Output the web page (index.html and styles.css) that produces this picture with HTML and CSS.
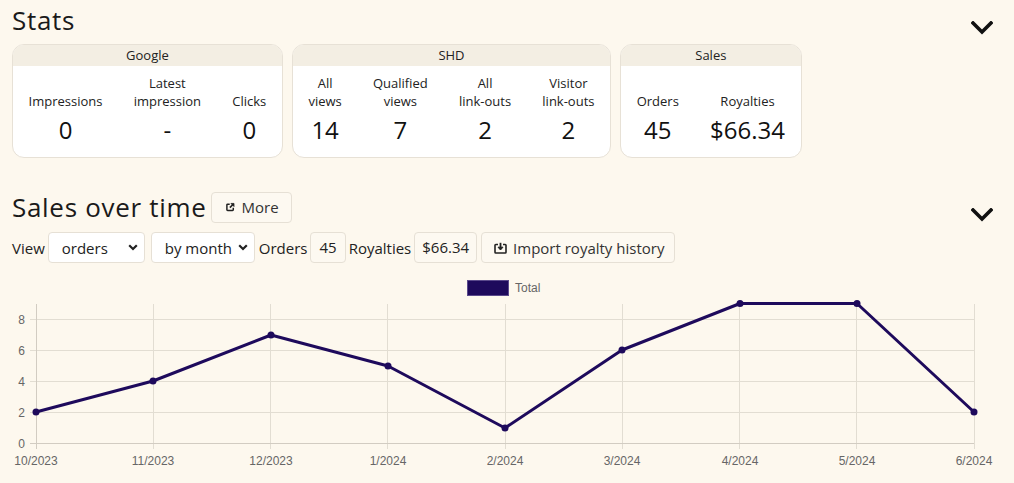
FILE: index.html
```html
<!DOCTYPE html>
<html lang="en">
<head>
<meta charset="utf-8">
<title>Stats</title>
<link rel="stylesheet" href="styles.css">
</head>
<body>
<main class="page">
  <section class="section">
    <div class="section-head">
      <h2 class="title">Stats</h2>
      <svg class="chev" width="22" height="14" viewBox="0 0 22 14"><polyline points="2,2 11,11 20,2" fill="none" stroke="#111" stroke-width="3.6" stroke-linecap="square"/></svg>
    </div>
    <div class="cards">
      <div class="card">
        <div class="card-head">Google</div>
        <div class="card-body">
          <div class="stat"><div class="label">Impressions</div><div class="value">0</div></div>
          <div class="stat"><div class="label">Latest<br>impression</div><div class="value">-</div></div>
          <div class="stat"><div class="label">Clicks</div><div class="value">0</div></div>
        </div>
      </div>
      <div class="card">
        <div class="card-head">SHD</div>
        <div class="card-body">
          <div class="stat"><div class="label">All<br>views</div><div class="value">14</div></div>
          <div class="stat"><div class="label">Qualified<br>views</div><div class="value">7</div></div>
          <div class="stat"><div class="label">All<br>link-outs</div><div class="value">2</div></div>
          <div class="stat"><div class="label">Visitor<br>link-outs</div><div class="value">2</div></div>
        </div>
      </div>
      <div class="card">
        <div class="card-head">Sales</div>
        <div class="card-body">
          <div class="stat"><div class="label">Orders</div><div class="value">45</div></div>
          <div class="stat"><div class="label">Royalties</div><div class="value">$66.34</div></div>
        </div>
      </div>
    </div>
  </section>

  <section class="section sales">
    <div class="section-head">
      <div class="title-row">
        <h2 class="title">Sales over time</h2>
        <button class="btn more">
          <svg width="12" height="12" viewBox="0 0 12 12"><path d="M5 2.2H2.2c-.6 0-1 .4-1 1v6.6c0 .6.4 1 1 1h6.6c.6 0 1-.4 1-1V7" fill="none" stroke="#222" stroke-width="2"/><path d="M6.6 1.2h4.2v4.2z" fill="#222" stroke="#222" stroke-width="1" stroke-linejoin="round"/><path d="M10 2L5.2 6.8" fill="none" stroke="#222" stroke-width="2.2"/></svg>
          More
        </button>
      </div>
      <svg class="chev" width="22" height="14" viewBox="0 0 22 14"><polyline points="2,2 11,11 20,2" fill="none" stroke="#111" stroke-width="3.6" stroke-linecap="square"/></svg>
    </div>
    <div class="controls">
      <span class="ctl-label">View</span>
      <div class="select w-orders"><span>orders</span><svg width="10" height="7" viewBox="0 0 10 7"><polyline points="1.2,1.2 5,5 8.8,1.2" fill="none" stroke="#222" stroke-width="2.2"/></svg></div>
      <div class="select w-month"><span>by month</span><svg width="10" height="7" viewBox="0 0 10 7"><polyline points="1.2,1.2 5,5 8.8,1.2" fill="none" stroke="#222" stroke-width="2.2"/></svg></div>
      <span class="ctl-label orders-label">Orders</span>
      <span class="box box-orders">45</span>
      <span class="ctl-label">Royalties</span>
      <span class="box">$66.34</span>
      <button class="btn import">
        <svg width="13" height="12" viewBox="0 0 13 12"><path d="M4 2.5H1.8c-.5 0-.8.3-.8.8v6.9c0 .5.3.8.8.8h9.4c.5 0 .8-.3.8-.8V3.3c0-.5-.3-.8-.8-.8H9" fill="none" stroke="#222" stroke-width="1.6"/><path d="M6.5 .8v6" fill="none" stroke="#222" stroke-width="1.8"/><path d="M4 5.2L6.5 8 9 5.2z" fill="#222" stroke="#222" stroke-width="1" stroke-linejoin="round"/></svg>
        Import royalty history
      </button>
    </div>
    <div class="chart">
      <svg width="990" height="213" viewBox="0 0 990 213" class="chart-svg">
        <g font-family="Liberation Sans, Arial, sans-serif" font-size="12" fill="#666">
          <rect x="455.5" y="10.5" width="41" height="15" fill="#1e0a5c" stroke="#5b4a8c" stroke-width="1"/>
          <text x="503" y="21.5">Total</text>
        </g>
        <g stroke="#e2ddd2" stroke-width="1">
          <line x1="18" y1="49.5" x2="962" y2="49.5"/>
          <line x1="18" y1="80.5" x2="962" y2="80.5"/>
          <line x1="18" y1="111.5" x2="962" y2="111.5"/>
          <line x1="18" y1="142.5" x2="962" y2="142.5"/>
          <line x1="141.5" y1="34" x2="141.5" y2="179"/>
          <line x1="258.5" y1="34" x2="258.5" y2="179"/>
          <line x1="375.5" y1="34" x2="375.5" y2="179"/>
          <line x1="493.5" y1="34" x2="493.5" y2="179"/>
          <line x1="610.5" y1="34" x2="610.5" y2="179"/>
          <line x1="727.5" y1="34" x2="727.5" y2="179"/>
          <line x1="844.5" y1="34" x2="844.5" y2="179"/>
          <line x1="962.5" y1="34" x2="962.5" y2="179"/>
        </g>
        <g stroke="#d2ccc2" stroke-width="1">
          <line x1="24.5" y1="34" x2="24.5" y2="179"/>
          <line x1="18" y1="173.5" x2="962" y2="173.5"/>
        </g>
        <g font-family="Liberation Sans, Arial, sans-serif" font-size="12" fill="#666" text-anchor="end">
          <text x="13" y="53.5">8</text>
          <text x="13" y="84.5">6</text>
          <text x="13" y="115.5">4</text>
          <text x="13" y="146.5">2</text>
          <text x="13" y="177.5">0</text>
        </g>
        <g font-family="Liberation Sans, Arial, sans-serif" font-size="12" fill="#666" text-anchor="middle">
          <text x="24" y="195">10/2023</text>
          <text x="141" y="195">11/2023</text>
          <text x="259" y="195">12/2023</text>
          <text x="376" y="195">1/2024</text>
          <text x="493" y="195">2/2024</text>
          <text x="610" y="195">3/2024</text>
          <text x="728" y="195">4/2024</text>
          <text x="845" y="195">5/2024</text>
          <text x="962" y="195">6/2024</text>
        </g>
        <polyline points="24,142 141,111 259,65 376,96 493,158 610,80 728,33.5 845,33.5 962,142" fill="none" stroke="#1e0a5c" stroke-width="3" stroke-linejoin="round"/>
        <g fill="#1e0a5c">
          <circle cx="24" cy="142" r="3.5"/>
          <circle cx="141" cy="111" r="3.5"/>
          <circle cx="259" cy="65" r="3.5"/>
          <circle cx="376" cy="96" r="3.5"/>
          <circle cx="493" cy="158" r="3.5"/>
          <circle cx="610" cy="80" r="3.5"/>
          <circle cx="728" cy="33.5" r="3.5"/>
          <circle cx="845" cy="33.5" r="3.5"/>
          <circle cx="962" cy="142" r="3.5"/>
        </g>
      </svg>
    </div>
  </section>
</main>
</body>
</html>
```
FILE: styles.css
```css
* { box-sizing: border-box; }
html, body { margin: 0; padding: 0; }
body {
  background: #fdf8ee;
  color: #222;
  font-family: "Open Sans", "Noto Sans", sans-serif;
  width: 1014px;
  height: 483px;
  overflow: hidden;
}
.page { padding: 2px 12px 0 12px; }
.section-head {
  display: flex;
  justify-content: space-between;
  align-items: flex-start;
}
.title {
  margin: 0;
  font-family: "Open Sans", sans-serif;
  font-weight: 400;
  font-size: 26px;
  line-height: 36px;
  color: #1a1a1a;
  letter-spacing: 0.7px;
}
.chev { margin-right: 9px; margin-top: 19px; }
.cards {
  display: flex;
  gap: 9px;
  align-items: flex-start;
  margin-top: 6px;
}
.card {
  background: #fff;
  border: 1px solid #e7e1d6;
  border-radius: 12px;
  overflow: hidden;
}
.card-head {
  background: #f3eee3;
  text-align: center;
  font-size: 13px;
  line-height: 21px;
  color: #222;
}
.card-body {
  display: flex;
  padding: 8px 0 11px;
}
.stat {
  padding: 0 15.6px;
  text-align: center;
}
.label {
  height: 36px;
  font-size: 13px;
  line-height: 18px;
  display: flex;
  flex-direction: column;
  justify-content: flex-end;
  color: #222;
  white-space: nowrap;
}
.value {
  margin-top: 4px;
  font-size: 24px;
  line-height: 32px;
  color: #111;
}
.sales { margin-top: 31px; }
.title-row { display: flex; align-items: center; gap: 4px; }
.btn {
  font-family: "Open Sans", sans-serif;
  font-size: 15px;
  color: #333;
  background: #fdf9f1;
  border: 1px solid #e6e0d5;
  border-radius: 4px;
  height: 31px;
  display: inline-flex;
  align-items: center;
  gap: 7px;
  padding: 0 12px 0 14px;
}
.more { width: 81px; }
.controls {
  margin-top: 7px;
  display: flex;
  align-items: center;
  gap: 3px;
  font-size: 15px;
}
.ctl-label { color: #222; }
.select {
  background: #fff;
  border: 1px solid #e6e0d5;
  border-radius: 4px;
  height: 31px;
  display: flex;
  align-items: center;
  justify-content: space-between;
  padding: 0 6px 0 13px;
  color: #222;
}
.w-orders { width: 97px; }
.w-month { width: 104px; margin-left: 3px; }
.orders-label { margin-left: 1px; }
.box {
  background: #fdf9f1;
  border: 1px solid #e6e0d5;
  border-radius: 4px;
  height: 31px;
  line-height: 29px;
  padding: 0 7px;
  color: #222;
}
.box-orders { padding: 0 8px; }
.import { margin-left: 1px; gap: 6px; padding: 0 10px 0 12px; }
.chart { margin-top: 7px; }
.chart-svg { display: block; }
```
